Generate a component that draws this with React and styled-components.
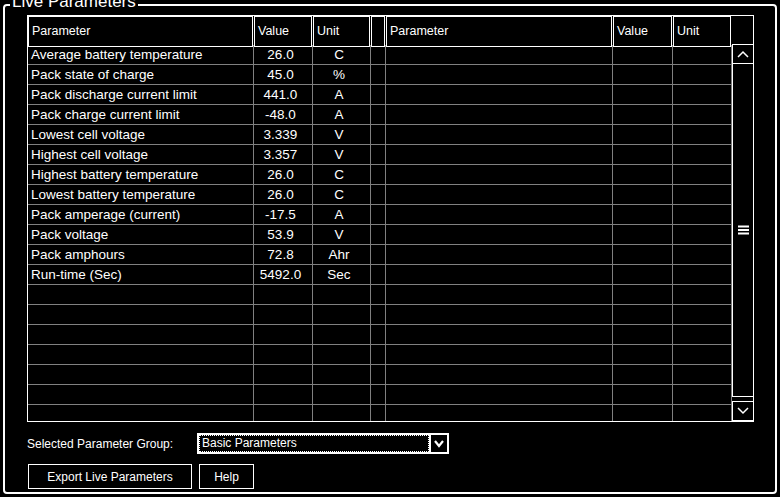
import React from "react";
import styled, { createGlobalStyle } from "styled-components";

const G = createGlobalStyle`
  html,body{margin:0;background:#000;color:#fff;font-family:"Liberation Sans",Arial,sans-serif;}
  body{width:780px;height:497px;overflow:hidden;}
`;
const Frame = styled.div`
  position:relative;margin:4px 3px 0 3px;height:490px;box-sizing:border-box;
  border:2px solid #fff;border-radius:4px;padding:9px 0 0 22px;
`;
const Legend = styled.div`
  position:absolute;left:5px;top:-13px;background:#000;padding:0 2px;font-size:17px;line-height:18px;
`;
const Table = styled.div`
  display:flex;width:727px;height:407px;box-sizing:border-box;border:1px solid #fff;overflow:hidden;
`;
const Grid = styled.div`flex:1;display:flex;flex-direction:column;`;
const cols = "226px 59px 58px 15px 227px 60px 59px";
const Row = styled.div`
  display:grid;grid-template-columns:${cols};height:${p=>p.$h||20}px;box-sizing:border-box;
  border-bottom:1px solid ${p=>p.$head?"#000":"#808080"};flex-shrink:0;
`;
const Cell = styled.div`
  box-sizing:border-box;border-right:1px solid #808080;font-size:13.5px;line-height:19px;
  padding:0 3px;white-space:nowrap;overflow:hidden;text-align:${p=>p.$c?"center":"left"};
  ${p=>p.$c?"padding-right:8px;":""}
`;
const HCell = styled.div`
  box-sizing:border-box;border:1px solid #fff;margin-right:1px;font-size:12.5px;line-height:29px;padding:0 3px;
`;
const Scroll = styled.div`
  width:21px;display:flex;flex-direction:column;padding-top:28px;box-sizing:border-box;
`;
const SBtn = styled.div`
  height:20px;box-sizing:border-box;border:1px solid #fff;border-right:0;display:flex;align-items:center;justify-content:center;
`;
const Thumb = styled.div`
  flex:1;box-sizing:border-box;border-left:1px solid #fff;border-bottom:1px solid #fff;margin-bottom:4px;display:flex;align-items:center;justify-content:center;
`;
const Controls = styled.div`display:flex;align-items:center;margin-top:11px;font-size:12px;`;
const Label = styled.span`width:170px;`;
const Select = styled.div`
  width:252px;height:21px;box-sizing:border-box;border:2px solid #fff;display:flex;
`;
const SelText = styled.div`flex:1;margin:1px;outline:1px dotted #fff;padding-left:2px;line-height:15px;font-size:12px;`;
const Arrow = styled.div`width:16px;border-left:2px solid #fff;display:flex;align-items:center;justify-content:center;`;
const Buttons = styled.div`display:flex;gap:7px;margin-top:10px;margin-left:1px;`;
const Btn = styled.div`
  width:${p=>p.$w}px;height:25px;box-sizing:border-box;border:1px solid #fff;font-size:12px;
  display:flex;align-items:center;justify-content:center;
`;

const data = [
  ["Average battery temperature","26.0","C"],["Pack state of charge","45.0","%"],
  ["Pack discharge current limit","441.0","A"],["Pack charge current limit","-48.0","A"],
  ["Lowest cell voltage","3.339","V"],["Highest cell voltage","3.357","V"],
  ["Highest battery temperature","26.0","C"],["Lowest battery temperature","26.0","C"],
  ["Pack amperage (current)","-17.5","A"],["Pack voltage","53.9","V"],
  ["Pack amphours","72.8","Ahr"],["Run-time (Sec)","5492.0","Sec"],
];
const rows = Array.from({length:19},(_,i)=>data[i]||["","",""]);

export default function App(){
  return (<>
    <G/>
    <Frame>
      <Legend>Live Parameters</Legend>
      <Table>
        <Grid>
          <Row $head $h={29}>
            {["Parameter","Value","Unit","","Parameter","Value","Unit"].map((h,i)=><HCell key={i}>{h}</HCell>)}
          </Row>
          {rows.map((r,i)=>(
            <Row key={i}>
              <Cell>{r[0]}</Cell><Cell $c>{r[1]}</Cell><Cell $c>{r[2]}</Cell>
              <Cell/><Cell/><Cell/><Cell/>
            </Row>
          ))}
        </Grid>
        <Scroll>
          <SBtn><svg width="12" height="8"><path d="M1 7 L6 2 L11 7" stroke="#fff" strokeWidth="1.5" fill="none"/></svg></SBtn>
          <Thumb><svg width="11" height="10"><path d="M0 1.5H11M0 5H11M0 8.5H11" stroke="#fff" strokeWidth="2"/></svg></Thumb>
          <SBtn><svg width="12" height="8"><path d="M1 1 L6 6 L11 1" stroke="#fff" strokeWidth="1.5" fill="none"/></svg></SBtn>
        </Scroll>
      </Table>
      <Controls>
        <Label>Selected Parameter Group:</Label>
        <Select>
          <SelText>Basic Parameters</SelText>
          <Arrow><svg width="10" height="8"><path d="M1 1 L5 6 L9 1" stroke="#fff" strokeWidth="2.2" fill="none"/></svg></Arrow>
        </Select>
      </Controls>
      <Buttons>
        <Btn $w={164}>Export Live Parameters</Btn>
        <Btn $w={55}>Help</Btn>
      </Buttons>
    </Frame>
  </>);
}
